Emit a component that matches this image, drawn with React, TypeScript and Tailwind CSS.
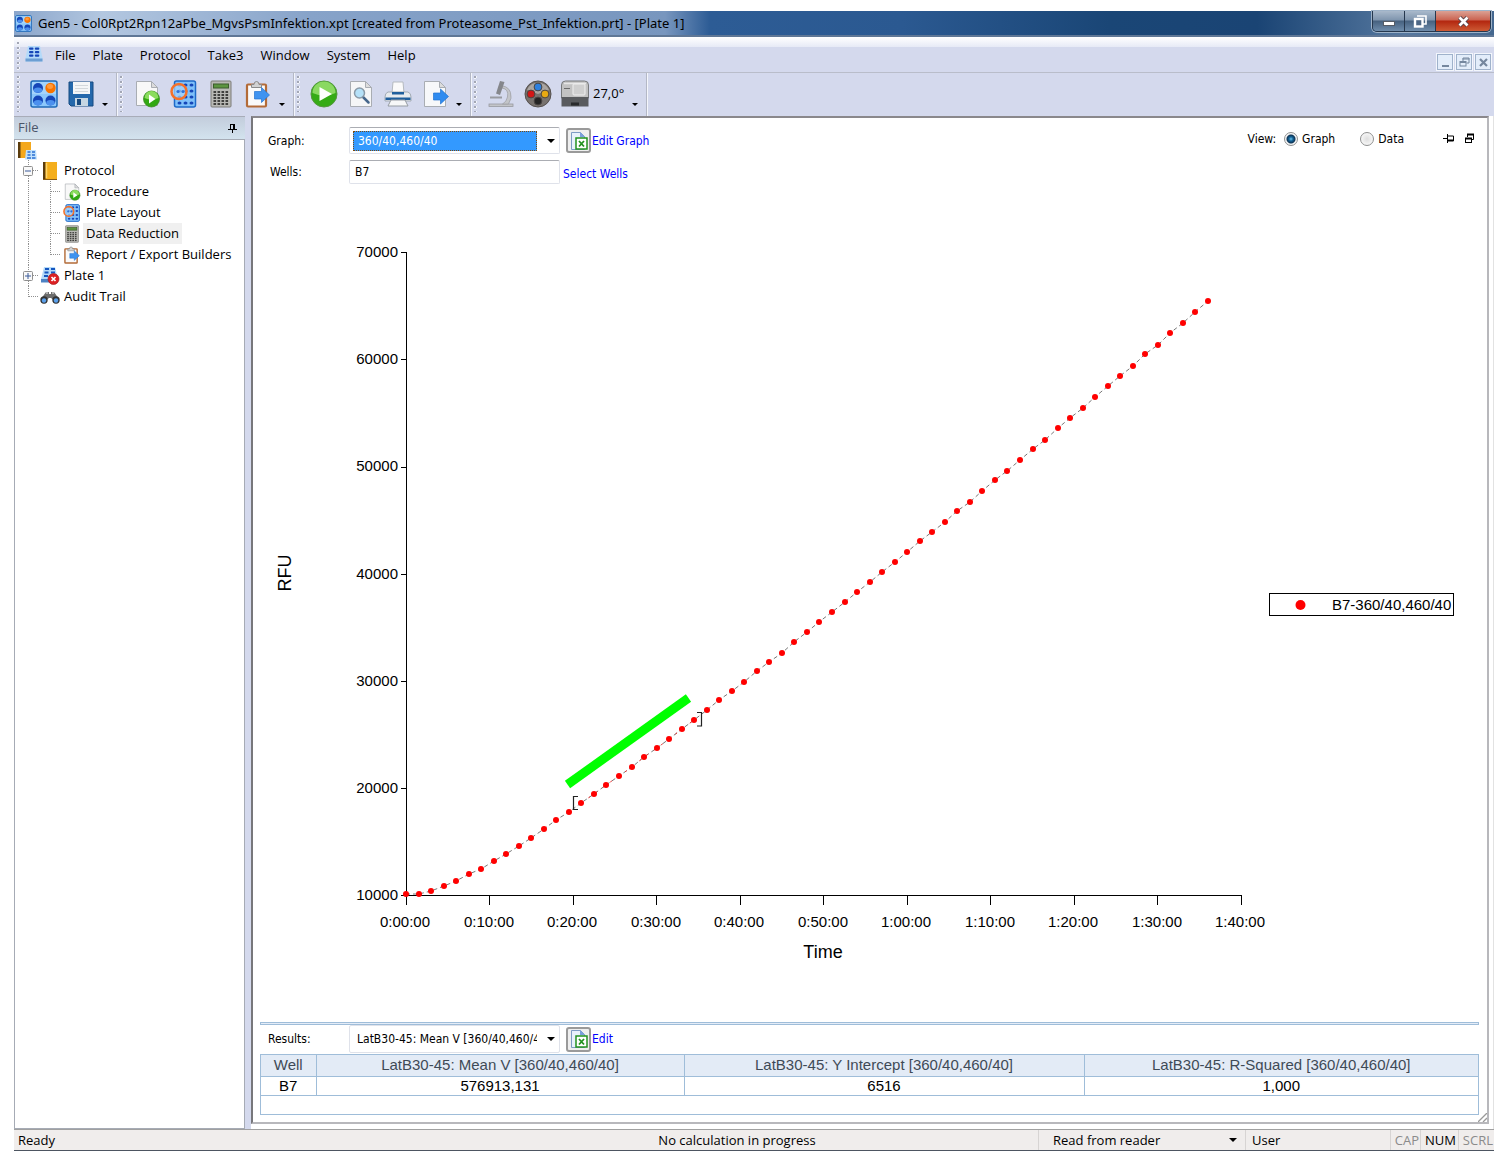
import React, { useState } from "react";

const SEGOE = "font-['Open_Sans','Noto_Sans',sans-serif]";
const TAHOMA = "font-['DejaVu_Sans_Condensed','DejaVu_Sans',sans-serif]";

type IconProps = { className?: string };

function PlateLogo({ className }: IconProps) {
  return (
    <svg viewBox="0 0 28 28" className={className} aria-hidden="true">
      <rect x="1" y="1" width="26" height="26" rx="2" fill="#8cc8fb" stroke="#1f6ab8" strokeWidth="1.500" />
      <path d="M2 14V2h24v12z" fill="#b4dcfb" opacity="0.600" />
      {[[8, 8], [8, 20.500], [20.500, 20.500]].map(([x, y]) => (
        <g key={`${x}-${y}`}>
          <circle cx={x} cy={y} r="5" fill="#1546b8" />
          <ellipse cx={x} cy={y + 2.200} rx="4.200" ry="2.600" fill="#4c90ee" />
        </g>
      ))}
      <circle cx="20.500" cy="8" r="5.200" fill="#f87400" />
      <ellipse cx="20" cy="6.500" rx="3" ry="2.400" fill="#ff9a3c" />
    </svg>
  );
}

function SaveIcon({ className }: IconProps) {
  return (
    <svg viewBox="0 0 28 28" className={className} aria-hidden="true">
      <path d="M2 2h24v24H4l-2-2z" fill="#2468ab" stroke="#174a80" />
      <rect x="6" y="2" width="17" height="12" fill="#f4f6f7" />
      <path d="M8 5.500h13M8 8.500h13M8 11.500h13" stroke="#d3d8db" />
      <rect x="8" y="18" width="13" height="8" fill="#c6d6e2" />
      <rect x="10" y="19" width="4" height="6" fill="#174a80" />
    </svg>
  );
}

function DocPlayIcon({ className }: IconProps) {
  return (
    <svg viewBox="0 0 28 28" className={className} aria-hidden="true">
      <path d="M3.500 1.500h15l6 6v18h-21z" fill="#f8f8f8" stroke="#a9adb3" />
      <path d="M18.500 1.500v6h6z" fill="#dcdcdc" stroke="#a9adb3" />
      <circle cx="18.500" cy="19" r="8" fill="#31a812" stroke="#3f8a2a" strokeWidth="0.800" />
      <path d="M11.500 18a7 7 0 0 1 14 0q-7 3-14 0z" fill="#8bdc5e" />
      <path d="M16 14.500v9l6.500-4.500z" fill="#fff" />
    </svg>
  );
}

function PlateLayoutIcon({ className }: IconProps) {
  return (
    <svg viewBox="0 0 28 28" className={className} aria-hidden="true">
      <rect x="4.500" y="1" width="21" height="26" rx="2" fill="#7fc0fa" stroke="#1d69c8" strokeWidth="1.500" />
      {[5, 11, 17, 23].map((y) => (
        <g key={y} fill="#1546b8">
          <ellipse cx="9.500" cy={y} rx="2" ry="1.600" />
          <ellipse cx="15.500" cy={y} rx="2" ry="1.600" />
          <ellipse cx="21.500" cy={y} rx="2" ry="1.600" />
        </g>
      ))}
      <circle cx="9" cy="11.500" r="7.500" fill="#a8d4fb" fillOpacity="0.700" stroke="#f4712a" strokeWidth="2.500" />
      <circle cx="8" cy="11.500" r="1.600" fill="#2d70d8" />
      <circle cx="13" cy="11.500" r="1.600" fill="#2d70d8" />
    </svg>
  );
}

function CalcIcon({ className }: IconProps) {
  return (
    <svg viewBox="0 0 28 28" className={className} aria-hidden="true">
      <rect x="4" y="1" width="20" height="26" rx="1" fill="#b9b9b5" stroke="#7c7c78" />
      <rect x="6.500" y="4" width="15" height="4" fill="#5c9440" stroke="#3b5c2c" />
      {[11, 14, 17, 20, 23].map((y) => (
        <g key={y} fill="#40403e">
          <rect x="6.500" y={y} width="2.600" height="2" />
          <rect x="10.500" y={y} width="2.600" height="2" />
          <rect x="14.500" y={y} width="2.600" height="2" />
          <rect x="18.500" y={y} width="2.600" height="2" />
        </g>
      ))}
    </svg>
  );
}

function ClipExportIcon({ className }: IconProps) {
  return (
    <svg viewBox="0 0 28 28" className={className} aria-hidden="true">
      <rect x="3" y="4.500" width="19" height="22" rx="1" fill="#fafafa" stroke="#b36b38" strokeWidth="2.200" />
      <path d="M7.500 7.500V4.500h2.500a2.500 3 0 0 1 5 0H17.500v3z" fill="#d2d2d2" stroke="#8a8a8a" />
      <path d="M10.500 11.500h7v-4l8 7.500-8 7.500V19h-7z" fill="#3f93f0" stroke="#2273d0" strokeWidth="0.700" />
    </svg>
  );
}

function PlayIcon({ className }: IconProps) {
  return (
    <svg viewBox="0 0 28 28" className={className} aria-hidden="true">
      <circle cx="14" cy="14" r="13" fill="#35ab16" stroke="#54963f" />
      <path d="M2.500 13a11.500 11.500 0 0 1 23 0q-11 5-23 0z" fill="#8ad962" />
      <path d="M9.500 7v14L22 14z" fill="#fff" />
    </svg>
  );
}

function PreviewIcon({ className }: IconProps) {
  return (
    <svg viewBox="0 0 28 28" className={className} aria-hidden="true">
      <path d="M3.500 1.500h15l6 6v19h-21z" fill="#f5f6f7" stroke="#a9adb3" />
      <path d="M18.500 1.500v6h6z" fill="#dcdcdc" stroke="#a9adb3" />
      <path d="M16 17l5.500 5.500" stroke="#46678c" strokeWidth="2.500" strokeLinecap="round" />
      <circle cx="12.500" cy="13" r="5" fill="#b5e1f8" stroke="#8a9aa8" strokeWidth="1.500" />
    </svg>
  );
}

function PrintIcon({ className }: IconProps) {
  return (
    <svg viewBox="0 0 28 28" className={className} aria-hidden="true">
      <path d="M9 2h10l1 11H8z" fill="#fafafa" stroke="#b5bac0" />
      <path d="M4 12h20q3 1 3 5v4H1v-4q0-4 3-5z" fill="#e8ebee" stroke="#a2abb5" />
      <path d="M1.500 17.500h25V20h-25z" fill="#1f5e9c" />
      <path d="M8 12h12v2.500H8z" fill="#1f5e9c" />
      <path d="M7 20h14l3 6H4z" fill="#f6f7f8" stroke="#969ca3" />
    </svg>
  );
}

function DocExportIcon({ className }: IconProps) {
  return (
    <svg viewBox="0 0 28 28" className={className} aria-hidden="true">
      <path d="M3.500 1.500h15l6 6v19h-21z" fill="#f7f8fa" stroke="#a9adb3" />
      <path d="M18.500 1.500v6h6z" fill="#dcdcdc" stroke="#a9adb3" />
      <path d="M12.500 13h7V9l8 7.500-8 7.500v-4h-7z" fill="#2f8bf0" stroke="#2273d0" strokeWidth="0.700" />
    </svg>
  );
}

function MicroscopeIcon({ className }: IconProps) {
  return (
    <svg viewBox="0 0 28 28" className={className} aria-hidden="true">
      <rect x="2" y="24" width="24" height="2.500" fill="#c3c5c9" stroke="#989aa0" strokeWidth="0.800" />
      <path d="M3 17.500h12" stroke="#989aa0" strokeWidth="2" />
      <path d="M15 8q7 1 5.500 9-1 5-5 7h6q4-6 2-11.500-2-5.500-7.500-6.500z" fill="#c3c5c9" stroke="#9fa1a6" strokeWidth="0.800" />
      <path d="M13 1l4.500 1-4.500 13-4-1.500z" fill="#85878c" />
    </svg>
  );
}

function FilterWheelIcon({ className }: IconProps) {
  return (
    <svg viewBox="0 0 28 28" className={className} aria-hidden="true">
      <circle cx="14" cy="14" r="13" fill="#77726e" stroke="#55504d" />
      <path d="M3 10a12 12 0 0 1 22 0L14 14z" fill="#aaa5a1" />
      <circle cx="14" cy="7" r="3.900" fill="#2d80df" stroke="#4a4543" />
      <circle cx="7" cy="14" r="3.900" fill="#d31616" stroke="#4a4543" />
      <circle cx="21" cy="14" r="3.900" fill="#e8aa12" stroke="#4a4543" />
      <circle cx="14" cy="21" r="3.900" fill="#242424" stroke="#4a4543" />
    </svg>
  );
}

function ReaderIcon({ className }: IconProps) {
  return (
    <svg viewBox="0 0 28 28" className={className} aria-hidden="true">
      <path d="M0.500 5q0-4 4-4h19q4 0 4 4v13h-27z" fill="#c2c2c2" stroke="#77797b" />
      <path d="M3 3.500h22" stroke="#e6e6e6" strokeWidth="1.500" />
      <rect x="12" y="4" width="12" height="11" rx="1" fill="#cfcfcf" stroke="#f0f0f0" />
      <path d="M3 8.500h6" stroke="#6a6a6a" />
      <path d="M0.500 17h27v9.500h-27z" fill="#595b5e" />
      <path d="M10 22.500h8v3h-8z" fill="#292b2d" />
    </svg>
  );
}

function PlateTrayIcon({ className }: IconProps) {
  return (
    <svg viewBox="0 0 18 16" className={className} aria-hidden="true">
      <path d="M3 0h12l2.500 12v3.500H.5V12z" fill="#b4daf9" />
      <path d="M.5 12.500h17v3H.5z" fill="#6c9fd3" />
      {[1.500, 5, 8.500].map((y) => (
        <g key={y} fill="#1546b8">
          <rect x="4" y={y} width="4.500" height="2.200" rx="1" />
          <rect x="9.800" y={y} width="4.500" height="2.200" rx="1" />
        </g>
      ))}
    </svg>
  );
}

function BookIcon({ className }: IconProps) {
  return (
    <svg viewBox="0 0 18 18" className={className} aria-hidden="true">
      <rect x="2" y="0" width="14" height="17" fill="#f4ae1c" />
      <rect x="2" y="0" width="2.500" height="17" fill="#5a3c0e" />
      <path d="M5.500 1v15" stroke="#ffd56b" strokeWidth="1.500" />
      <path d="M2 17.500h14" stroke="#8a5c14" />
    </svg>
  );
}

function RootIcon({ className }: IconProps) {
  return (
    <svg viewBox="0 0 20 19" className={className} aria-hidden="true">
      <rect x="1" y="1" width="13" height="16" fill="#f4a81c" />
      <rect x="1" y="1" width="2.500" height="16" fill="#5a3c0e" />
      <path d="M9 9h10l1 9.500H8z" fill="#c1e1fb" />
      <path d="M10.500 11h3M15 11h3M10.500 14h3M15 14h3M10 17h4M15 17h3.500" stroke="#2a6fd4" strokeWidth="1.500" />
    </svg>
  );
}

function PlateErrorIcon({ className }: IconProps) {
  return (
    <svg viewBox="0 0 20 19" className={className} aria-hidden="true">
      <path d="M4 1h11l3 12v3H1v-3z" fill="#b4daf9" />
      <path d="M1 13h17v3.500H1z" fill="#4c82c4" />
      <path d="M5 3h4M11 3h4M4.500 6.500h4M11 6.500h4M4 10h4M11 10h4" stroke="#1556c0" strokeWidth="2" />
      <circle cx="13.500" cy="13" r="5.500" fill="#dc2023" stroke="#a31518" strokeWidth="0.600" />
      <path d="M11.500 11l4 4M15.500 11l-4 4" stroke="#fff" strokeWidth="1.700" />
    </svg>
  );
}

function BinocularsIcon({ className }: IconProps) {
  return (
    <svg viewBox="0 0 20 18" className={className} aria-hidden="true">
      <path d="M1 11L6 4h3v2h2V4h3l5 7-4 2-4-3H9l-4 3z" fill="#6c6c6c" />
      <path d="M6 5h2M12 5h2" stroke="#c9c9c9" strokeWidth="1.500" />
      <circle cx="4" cy="12" r="3.700" fill="#333" />
      <circle cx="16" cy="12" r="3.700" fill="#333" />
      <circle cx="4" cy="12.500" r="2.200" fill="#5aa0ec" />
      <circle cx="16" cy="12.500" r="2.200" fill="#5aa0ec" />
    </svg>
  );
}

function ExcelIcon({ className }: IconProps) {
  return (
    <svg viewBox="0 0 20 20" className={className} aria-hidden="true">
      <path d="M2.500 1.500h9l4 4v13h-13z" fill="#e8f1fb" stroke="#7e9cc4" />
      <path d="M11 1v5h5z" fill="#7ba0dc" />
      <rect x="7" y="7" width="11" height="11" fill="#fff" stroke="#22921f" strokeWidth="1.500" />
      <path d="M10 10l5 5.500M15 10l-5 5.500" stroke="#22921f" strokeWidth="1.800" />
    </svg>
  );
}

function CaretDown({ className }: IconProps) {
  return (
    <svg viewBox="0 0 8 4" className={className} aria-hidden="true">
      <path d="M0 0h8L4 4z" fill="#000" />
    </svg>
  );
}

function Grip({ className = "h-8" }: IconProps) {
  return (
    <div
      className={`w-1 shrink-0 bg-[radial-gradient(circle_at_1px_1px,#a3a7b5_1px,#f4f6fc_1px,#f4f6fc_2px,transparent_2px)] bg-[length:4px_5px] ${className}`}
    />
  );
}

function ToolGroup({
  items,
  label,
}: {
  items: { name: string; icon: React.ReactNode }[];
  label?: string;
}) {
  return (
    <div className="flex items-center border-r border-[#b4b8c6] pb-0.5 pl-[3px] pr-[5px] shadow-[1px_0_0_#f4f6fc]">
      <Grip className="mr-1 h-9" />
      {items.map((it) => (
        <button key={it.name} type="button" title={it.name} aria-label={it.name} className="flex h-9 w-[37px] items-center justify-center">
          {it.icon}
        </button>
      ))}
      {label && <span className="w-9 text-[13px]">{label}</span>}
      <button type="button" aria-label="More options" className="flex h-9 w-3 items-end justify-center pb-1.5">
        <CaretDown className="h-[3px] w-1.5" />
      </button>
    </div>
  );
}

const ic = "h-7 w-7";
const toolGroups = [
  {
    items: [
      { name: "New", icon: <PlateLogo className={ic} /> },
      { name: "Save", icon: <SaveIcon className={ic} /> },
    ],
  },
  {
    items: [
      { name: "Procedure", icon: <DocPlayIcon className={ic} /> },
      { name: "Plate Layout", icon: <PlateLayoutIcon className={ic} /> },
      { name: "Data Reduction", icon: <CalcIcon className={ic} /> },
      { name: "Report / Export Builders", icon: <ClipExportIcon className={ic} /> },
    ],
  },
  {
    items: [
      { name: "Read Plate", icon: <PlayIcon className={ic} /> },
      { name: "Print Preview", icon: <PreviewIcon className={ic} /> },
      { name: "Print", icon: <PrintIcon className={ic} /> },
      { name: "Export", icon: <DocExportIcon className={ic} /> },
    ],
  },
  {
    items: [
      { name: "Microscope", icon: <MicroscopeIcon className={ic} /> },
      { name: "Filter Wheel", icon: <FilterWheelIcon className={ic} /> },
      { name: "Reader", icon: <ReaderIcon className={ic} /> },
    ],
    label: "27,0°",
  },
];

function TitleBar() {
  return (
    <header className="flex h-[26px] items-start justify-between border-b-2 border-[#5f7796] bg-[linear-gradient(90deg,#8ba6cb_0,#b3c7e0_6%,#87a3c9_20%,#7896be_44%,#2d5c95_47%,#2b5991_60%,#1a4676_74%,#1a4474_84%,#56789f_94%,#44678f_100%)]">
      <div className="flex h-6 items-center">
        <PlateLogo className="ml-px mr-1.5 h-[17px] w-[17px]" />
        <h1 className="whitespace-nowrap font-['Noto_Sans','Open_Sans',sans-serif] text-[13px] leading-6 text-black">
          Gen5 - Col0Rpt2Rpn12aPbe_MgvsPsmInfektion.xpt [created from Proteasome_Pst_Infektion.prt] - [Plate 1]
        </h1>
      </div>
      <div className="mr-[3px] flex h-[21px] overflow-hidden rounded-b-[5px] border border-t-0 border-[#26384e] ring-1 ring-[#9db2c8]">
        <button type="button" aria-label="Minimize" className="flex w-8 items-center justify-center border-r border-[#26384e] bg-[linear-gradient(#a9b9cb_0,#7f95ae_45%,#46617f_50%,#6e8cab_100%)]">
          <svg viewBox="0 0 12 5" className="mt-1 h-[5px] w-3"><rect x="0.500" y="0.500" width="11" height="4" fill="#fff" stroke="#555c66" /></svg>
        </button>
        <button type="button" aria-label="Restore" className="flex w-[31px] items-center justify-center border-r border-[#26384e] bg-[linear-gradient(#a9b9cb_0,#7f95ae_45%,#46617f_50%,#6e8cab_100%)]">
          <svg viewBox="0 0 14 13" className="h-[13px] w-3.5">
            <path d="M4 1h9v8h-3" fill="none" stroke="#fff" strokeWidth="1.600" />
            <rect x="2" y="4" width="7.500" height="7.500" fill="#4d6785" stroke="#fff" strokeWidth="2.400" />
          </svg>
        </button>
        <button type="button" aria-label="Close" className="flex w-[54px] items-center justify-center bg-[linear-gradient(#dba194_0,#cb6350_45%,#b3260f_50%,#cd5a34_100%)]">
          <svg viewBox="0 0 13 11" className="h-[11px] w-[13px]">
            <path d="M2.500 1.500l8 8M10.500 1.500l-8 8" stroke="#54434a" strokeWidth="4.500" />
            <path d="M2.500 1.500l8 8M10.500 1.500l-8 8" stroke="#fff" strokeWidth="2.700" />
          </svg>
        </button>
      </div>
    </header>
  );
}

const mdiButton = "flex h-4 w-4 items-center justify-center border border-[#9fb2cb] bg-[#e3edfa] ring-1 ring-[#f3f6fc]";

function MenuBar() {
  return (
    <nav className="flex h-9 items-center justify-between border-b border-[#b9bdca] bg-[linear-gradient(#ffffff_0,#e6eaf6_10px,#d4d9ed_10px)] pl-[3px]">
      <div className="flex items-center pt-0.5">
        <Grip className="mr-1 h-7" />
        <PlateTrayIcon className="mb-1 mr-3 h-4 w-[18px]" />
        <ul className="flex gap-[17px] text-[13px]">
          {["File", "Plate", "Protocol", "Take3", "Window", "System", "Help"].map((m) => (
            <li key={m}><button type="button">{m}</button></li>
          ))}
        </ul>
      </div>
      <div className="mr-[3px] flex gap-[3px] self-end pb-0.5">
        <button type="button" aria-label="Minimize document" className={mdiButton}>
          <svg viewBox="0 0 9 9" className="h-[9px] w-[9px]"><path d="M1 8h7" stroke="#75879e" strokeWidth="2" /></svg>
        </button>
        <button type="button" aria-label="Restore document" className={mdiButton}>
          <svg viewBox="0 0 11 10" className="h-2.5 w-[11px]" fill="none" stroke="#75879e">
            <path d="M4 4V1h6v5H7.500M3.500 2h7" /><rect x="1" y="4.500" width="6" height="4.500" /><path d="M1 5.500h6" />
          </svg>
        </button>
        <button type="button" aria-label="Close document" className={mdiButton}>
          <svg viewBox="0 0 9 9" className="h-[9px] w-[9px]"><path d="M1 1l7 7M8 1l-7 7" stroke="#75879e" strokeWidth="2.200" /></svg>
        </button>
      </div>
    </nav>
  );
}

type Joint = "none" | "tee" | "end" | "line" | "minus" | "plus";

function Connector({ kind }: { kind: Joint }) {
  return (
    <svg viewBox="0 0 22 21" className="h-[21px] w-[22px] shrink-0" aria-hidden="true">
      <g stroke="#909090" strokeDasharray="1 1">
        {kind !== "none" && <path d={kind === "end" ? "M11.500 0v11" : "M11.500 0v21"} />}
        {kind !== "none" && kind !== "line" && <path d="M12 10.500h10" />}
      </g>
      {(kind === "minus" || kind === "plus") && (
        <g>
          <rect x="6.500" y="6.500" width="9" height="9" rx="1" fill="#f8f8f8" stroke="#8f8f8f" />
          <path d={kind === "plus" ? "M8 11h6M11 8v6" : "M8 11h6"} stroke="#3b5a9a" />
        </g>
      )}
    </svg>
  );
}

const tree: { text: string; joints: Joint[]; icon: React.ReactNode; selected?: boolean }[] = [
  { text: "Protocol", joints: ["minus"], icon: <BookIcon className="h-[18px] w-[18px]" /> },
  { text: "Procedure", joints: ["line", "tee"], icon: <DocPlayIcon className="h-[18px] w-[18px]" /> },
  { text: "Plate Layout", joints: ["line", "tee"], icon: <PlateLayoutIcon className="h-[18px] w-[18px]" /> },
  { text: "Data Reduction", joints: ["line", "tee"], icon: <CalcIcon className="h-[18px] w-[18px]" />, selected: true },
  { text: "Report / Export Builders", joints: ["line", "end"], icon: <ClipExportIcon className="h-[18px] w-[18px]" /> },
  { text: "Plate 1", joints: ["plus"], icon: <PlateErrorIcon className="h-[19px] w-5" /> },
  { text: "Audit Trail", joints: ["end"], icon: <BinocularsIcon className="h-[18px] w-5" /> },
];

function Sidebar() {
  return (
    <aside className="flex w-[231px] shrink-0 flex-col">
      <div className="flex h-[23px] items-center justify-between border-t border-[#a8acb8] bg-gradient-to-b from-[#c3cddc] to-[#d3e3ee] pl-1 pr-2 text-[13px] text-[#4a5568]">
        <h2>File</h2>
        <button type="button" aria-label="Pin panel">
          <svg viewBox="0 0 9 9" className="h-[9px] w-[9px]" fill="none" stroke="#000">
            <path d="M2.500 0v5.500M2 .5h4M0 5.500h9M4.500 6v3" /><path d="M6 0v5.500" strokeWidth="2" />
          </svg>
        </button>
      </div>
      <div className="flex-1 border border-[#a6abb5] bg-white pl-0.5">
        <div className="flex h-5 items-center"><RootIcon className="h-[19px] w-5" /></div>
        <ul className="text-[13px]">
          {tree.map((n) => (
            <li key={n.text} className="flex h-[21px] items-center">
              {n.joints.map((j, i) => <Connector key={i} kind={j} />)}
              <span className="flex w-[22px] shrink-0 justify-center">{n.icon}</span>
              <button type="button" className={`whitespace-nowrap px-[3px] leading-[21px] ${n.selected ? "bg-[#f0f0f0]" : ""}`}>{n.text}</button>
            </li>
          ))}
        </ul>
      </div>
    </aside>
  );
}

// Vertical plot positions of the reads, one every 90 seconds.
const readings = [
  894, 894, 891, 886, 881, 874, 869, 861, 854, 846, 838, 829, 820, 812, 803, 794, 785, 776, 767, 757, 748, 739,
  729, 720, 710, 700, 691, 682, 671, 662, 653, 642, 632, 622, 612, 602, 592, 582, 572, 562, 552, 541, 532, 522,
  511, 502, 491, 480, 471, 460, 449, 440, 428, 418, 408, 397, 386, 376, 366, 354, 345, 333, 323, 312, 301,
];
const points = readings.map((y, i) => [Math.round(406 + i * 12.53), y]);
const times = ["0:00:00", "0:10:00", "0:20:00", "0:30:00", "0:40:00", "0:50:00", "1:00:00", "1:10:00", "1:20:00", "1:30:00", "1:40:00"];

function KineticChart() {
  return (
    <svg viewBox="260 184 1219 838" className="block h-auto w-full font-['Liberation_Sans',Arial,sans-serif]" role="img" aria-label="RFU over time for well B7">
      <g stroke="#000" shapeRendering="crispEdges">
        <path d="M406.500 252v643.500M401 895.500h841" fill="none" />
        {[252, 359, 467, 574, 681, 788].map((y) => <path key={y} d={`M401 ${y + 0.5}h5`} />)}
        {times.map((t, i) => <path key={t} d={`M${Math.floor(406 + i * 83.5) + 0.5} 895v10`} />)}
      </g>
      <g fontSize="15" fill="#000">
        {[70000, 60000, 50000, 40000, 30000, 20000, 10000].map((v, i) => (
          <text key={v} x="398" y={Math.round(257 + i * 107.2)} textAnchor="end">{v}</text>
        ))}
        {times.map((t, i) => <text key={t} x={Math.round(405 + i * 83.5)} y="927" textAnchor="middle">{t}</text>)}
        <text x="823" y="958" textAnchor="middle" fontSize="18">Time</text>
        <text transform="translate(291 573) rotate(-90)" textAnchor="middle" fontSize="18">RFU</text>
      </g>
      <polyline points={points.map((p) => p.join(",")).join(" ")} fill="none" stroke="#777" strokeDasharray="4 3" />
      <polyline points={points.slice(14, 24).map((p) => p.join(",")).join(" ")} fill="none" stroke="#e33" strokeDasharray="2 7" />
      {points.map(([x, y]) => <circle key={x} cx={x} cy={y} r="3" fill="#f00" />)}
      <path d="M567.500 784.500L688.500 698" stroke="#0f0" strokeWidth="9" />
      <path d="M578 796.500h-4.500v13h4.500M697 712.500h4.500v13.500H697" fill="none" stroke="#222" strokeWidth="1.200" />
      <rect x="1269.500" y="593.500" width="184" height="22" fill="#fff" stroke="#000" />
      <circle cx="1300.500" cy="605" r="5" fill="#f00" />
      <text x="1332" y="610" fontSize="15">B7-360/40,460/40</text>
    </svg>
  );
}

function EditButton() {
  return (
    <button type="button" aria-label="Export to Excel" className="ml-1.5 flex h-[25px] w-[25px] items-center justify-center rounded-[3px] border-2 border-[#9a9a9a] bg-[#efefef]">
      <ExcelIcon className="h-5 w-5" />
    </button>
  );
}

const field = "w-[211px] rounded-[2px] border border-[#dfe2ea] bg-white";

function GraphPanel() {
  const [view, setView] = useState("Graph");
  return (
    <main className={`relative flex min-w-0 flex-1 flex-col border-2 border-b-[#b8b8bc] border-l-[#77777b] border-r-[#b8b8bc] border-t-[#8a888c] bg-white pb-[7px] pl-[7px] pr-2 text-[12px] ${TAHOMA}`}>
      <div className="mt-[9px] flex h-[27px] items-center">
        <label htmlFor="graph" className="w-[89px] shrink-0 pl-2">Graph:</label>
        <div className={`flex h-[27px] items-center border-t-[#abadb3] p-[3px] ${field}`}>
          <select id="graph" defaultValue="360/40,460/40" className="h-5 w-[184px] appearance-none bg-[#3399ff] pl-[5px] leading-[18px] text-white outline-1 -outline-offset-1 outline-dotted outline-[#7a4a10]">
            <option>360/40,460/40</option>
          </select>
          <CaretDown className="ml-2.5 h-1 w-2" />
        </div>
        <EditButton />
        <a href="#edit-graph" className="ml-px whitespace-nowrap text-[#0000ff]">Edit Graph</a>
        <div role="radiogroup" aria-label="View" className="ml-auto flex items-center whitespace-nowrap pb-1">
          <span className="mr-2">View:</span>
          {["Graph", "Data"].map((v) => (
            <label key={v} className="mr-[25px] flex items-center gap-1">
              <input
                type="radio"
                name="view"
                checked={view === v}
                onChange={() => setView(v)}
                className="h-3.5 w-3.5 appearance-none rounded-full border border-[#8e8f8f] bg-[radial-gradient(circle,#dedede_0,#f6f6f6_70%)] checked:bg-[radial-gradient(circle_at_50%_50%,#6cc5ee_0,#14659a_2px,#0d3354_4px,#f4f4f4_5px)]"
              />
              {v}
            </label>
          ))}
          <button type="button" aria-label="Pin" className="ml-3.5 mr-2.5">
            <svg viewBox="0 0 11 9" className="h-[9px] w-[11px]" fill="none" stroke="#000">
              <path d="M0 4.500h4M4.500 0v9M5 2h5.500v5" /><path d="M5 6.500h5.500" strokeWidth="2" />
            </svg>
          </button>
          <button type="button" aria-label="Float" className="mr-1">
            <svg viewBox="0 0 11 11" className="h-[11px] w-[11px]" fill="none" stroke="#000">
              <path d="M3.500 4V1.500h6v5H8" /><path d="M3 1.500h7M1 5.500h7" strokeWidth="2" /><rect x="1.500" y="5.500" width="6" height="4" />
            </svg>
          </button>
        </div>
      </div>
      <div className="mt-1.5 flex h-6 items-center">
        <label htmlFor="wells" className="w-[89px] shrink-0 pl-2.5">Wells:</label>
        <input id="wells" defaultValue="B7" className={`h-6 border-t-[#abadb3] px-[5px] ${field}`} />
        <a href="#select-wells" className="ml-[3px] whitespace-nowrap pt-1 text-[#0000ff]">Select Wells</a>
      </div>
      <KineticChart />
      <div className="h-[3px] border border-[#9fbdd9] bg-[#e4ecf7]" />
      <div className="flex h-7 items-center">
        <label htmlFor="results" className="w-[89px] shrink-0 pl-2">Results:</label>
        <div className={`flex h-7 items-center p-[3px] ${field}`}>
          <select id="results" className="h-5 w-[184px] appearance-none overflow-hidden pl-1 text-clip">
            <option>LatB30-45: Mean V [360/40,460/40]</option>
          </select>
          <CaretDown className="ml-2.5 h-1 w-2" />
        </div>
        <EditButton />
        <a href="#edit-results" className="ml-px text-[#0000ff]">Edit</a>
      </div>
      <div className="mt-px h-[61px] border border-[#9fbdd9] font-['Liberation_Sans',Arial,sans-serif] text-[15px]">
        <table className="w-full table-fixed border-collapse text-center">
          <colgroup>
            <col className="w-[55px]" />
            <col className="w-[368px]" />
            <col className="w-[400px]" />
            <col />
          </colgroup>
          <thead>
            <tr className="h-[21px] border-b border-[#9fbdd9] bg-[#e3ebf6] text-[#3f4a56]">
              {["Well", "LatB30-45: Mean V [360/40,460/40]", "LatB30-45: Y Intercept [360/40,460/40]", "LatB30-45: R-Squared [360/40,460/40]"].map((h) => (
                <th key={h} scope="col" className="border-r border-[#9fbdd9] p-0 font-normal leading-5 last:border-r-0">{h}</th>
              ))}
            </tr>
          </thead>
          <tbody>
            <tr className="h-[19px] border-b border-[#9fbdd9]">
              {["B7", "576913,131", "6516", "1,000"].map((c) => (
                <td key={c} className="border-r border-[#9fbdd9] p-0 leading-[18px] last:border-r-0">{c}</td>
              ))}
            </tr>
          </tbody>
        </table>
      </div>
      <svg viewBox="0 0 9 9" className="absolute bottom-0 right-0 h-[9px] w-[9px]" aria-hidden="true">
        <path d="M0 9L9 0M5 9l4-4" stroke="#9a9a9a" strokeWidth="1.300" />
      </svg>
    </main>
  );
}

function StatusBar() {
  return (
    <footer className="flex h-[22px] items-stretch whitespace-nowrap border-b border-t border-b-[#4d5561] border-t-[#a0a0a0] bg-[#f0edec] text-[13px] leading-5">
      <span className="w-[422px] pl-1">Ready</span>
      <span className="flex-1 text-center">No calculation in progress</span>
      <button type="button" className="flex w-[207px] items-center justify-between border-l border-[#d7d4d3] pl-3.5 pr-2">
        Read from reader
        <CaretDown className="h-1 w-2" />
      </button>
      <span className="w-[145px] border-l border-[#d7d4d3] pl-1.5">User</span>
      <span className="w-[30px] border-l border-[#d7d4d3] pr-px text-right text-[#8b8b8b]">CAP</span>
      <span className="w-[38px] border-l border-[#d7d4d3] pr-0.5 text-right">NUM</span>
      <span className="w-9 border-l border-[#d7d4d3] pr-px text-right text-[#8b8b8b]">SCRL</span>
    </footer>
  );
}

export default function App() {
  return (
    <div className={`flex min-h-screen flex-col bg-white pb-3 pl-3.5 pr-3 pt-[11px] text-black ${SEGOE}`}>
      <TitleBar />
      <MenuBar />
      <div className="flex h-[43px] items-stretch bg-[#d4d9ed]">
        {toolGroups.map((g, i) => <ToolGroup key={i} items={g.items} label={g.label} />)}
      </div>
      <div className="flex flex-1 bg-[#d4d9ed]">
        <Sidebar />
        <div className="ml-1.5 flex min-w-0 flex-1 border-r border-[#e2e2e2] bg-white pb-[5px] pr-1">
          <GraphPanel />
        </div>
      </div>
      <StatusBar />
    </div>
  );
}
